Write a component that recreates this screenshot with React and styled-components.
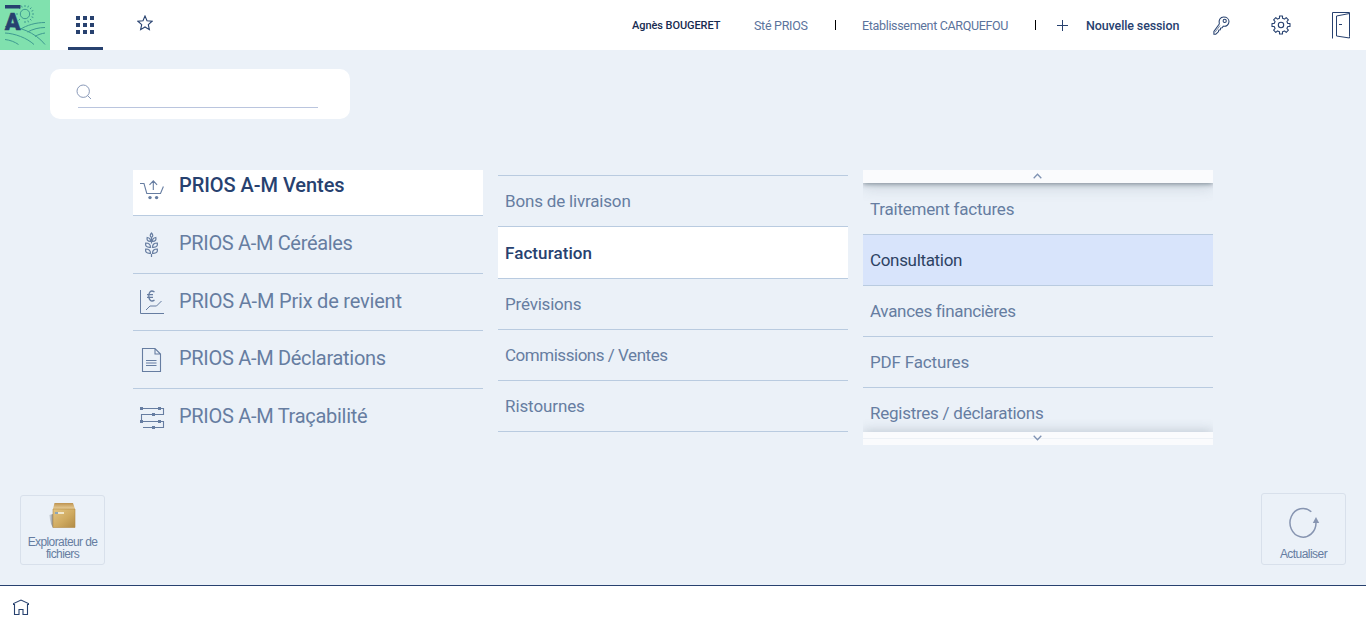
import React from 'react';
import styled, { createGlobalStyle } from 'styled-components';

const navy = '#27416f';
const muted = '#667da1';
const rule = '#b9cbe0';

const GlobalStyle = createGlobalStyle`
  * { box-sizing: border-box; }
  body { margin: 0; font-family: Roboto, "Liberation Sans", sans-serif; color: ${muted}; overflow: hidden; }
  svg { display: block; flex: none; }
`;

const Page = styled.div`
  display: flex;
  flex-direction: column;
  height: 627px;
  background: #ebf1f8;
`;

const Header = styled.header`
  display: flex;
  align-items: center;
  height: 50px;
  flex: none;
  background: #fff;
`;

const Tab = styled.div`
  display: flex;
  align-items: center;
  justify-content: center;
  width: 35px;
  height: 50px;
  margin-left: ${(p) => p.$gap}px;
  padding: ${(p) => (p.$active ? '3px 1px 0 0' : '0 1px 4px 0')};
  border-bottom: ${(p) => (p.$active ? `3px solid ${navy}` : 'none')};
`;

const Info = styled.div`
  display: flex;
  align-items: center;
  height: 50px;
  margin-left: auto;
  padding-right: 15px;
`;

const HeaderText = styled.span`
  width: ${(p) => p.$w}px;
  margin-right: ${(p) => p.$gap}px;
  font-size: ${(p) => p.$size}px;
  font-weight: ${(p) => (p.$strong ? 500 : 400)};
  letter-spacing: ${(p) => p.$ls}px;
  color: ${(p) => p.$color || '#5b739c'};
  line-height: 16px;
  padding-top: 1px;
  white-space: nowrap;
`;

const Divider = styled.span`
  width: 1px;
  height: 10px;
  margin-right: ${(p) => p.$gap}px;
  background: #000;
`;

const IconSlot = styled.span`
  margin-right: ${(p) => p.$gap || 0}px;
`;

const Main = styled.main`
  display: flex;
  flex-direction: column;
  flex: 1;
  padding: 19px 20px 20px;
`;

const Search = styled.div`
  width: 300px;
  height: 50px;
  margin-left: 30px;
  padding: 15px 32px 0 28px;
  border-radius: 10px;
  background: #fff;
`;

const SearchField = styled.div`
  height: 24px;
  border-bottom: 1px solid #bac5de;
`;

const SearchGlyph = styled.svg`
  margin-left: -2px;
`;

const Columns = styled.div`
  display: flex;
  gap: 15px;
  height: 275px;
  margin: 51px 0 0 113px;
`;

const Column = styled.div`
  display: flex;
  flex-direction: column;
  width: 350px;
  padding-top: ${(p) => p.$top || 0}px;
  overflow: hidden;
`;

const ModuleRow = styled.div`
  display: flex;
  align-items: center;
  flex: none;
  height: ${(p) => p.$h}px;
  margin-top: ${(p) => (p.$first ? -12 : 0)}px;
  padding: 0 0 ${(p) => p.$pad}px 6px;
  border-bottom: ${(p) => (p.$last ? 'none' : `1px solid ${rule}`)};
  background: ${(p) => (p.$active ? '#fff' : 'transparent')};
  color: ${(p) => (p.$active ? navy : muted)};
  font-size: 20px;
  font-weight: ${(p) => (p.$active ? 500 : 400)};
  letter-spacing: ${(p) => p.$ls}px;
  white-space: nowrap;
  svg { margin: ${(p) => p.$drop}px 14px 0 0; }
`;

const MenuList = styled.div`
  border-top: ${(p) => (p.$ruled ? `1px solid ${rule}` : 'none')};
`;

const MenuRow = styled.div`
  display: flex;
  align-items: center;
  height: ${(p) => p.$h || 51}px;
  padding-left: 7px;
  border-bottom: 1px solid ${rule};
  background: ${(p) => p.$bg || 'transparent'};
  color: ${(p) => p.$color || muted};
  font-size: 17px;
  font-weight: ${(p) => (p.$strong ? 500 : 400)};
  letter-spacing: ${(p) => p.$ls || 0}px;
  white-space: nowrap;
`;

const ScrollBar = styled.div`
  position: relative;
  display: flex;
  align-items: center;
  justify-content: center;
  flex: none;
  height: 13px;
  padding: 0 1px 1px 0;
  background: ${(p) => (p.$down ? 'linear-gradient(#fafbfd 6px, #edf1f6 6px, #edf1f6 7px, #fafbfd 7px)' : '#fafbfd')};
  box-shadow: ${(p) => (p.$down ? '0 -1px 12px rgba(60, 80, 100, .25)' : '0 1px 5px rgba(50, 65, 80, .55), 0 3px 16px rgba(60, 80, 100, .22)')};
`;

const ScrollArea = styled.div`
  height: 249px;
  overflow: hidden;
`;

const Shortcuts = styled.div`
  display: flex;
  justify-content: space-between;
  align-items: flex-end;
  margin-top: auto;
`;

const Shortcut = styled.div`
  display: flex;
  flex-direction: column;
  align-items: center;
  justify-content: flex-end;
  width: 85px;
  height: ${(p) => p.$h}px;
  padding-bottom: 4px;
  border: 1px solid #d8e0eb;
  border-radius: 3px;
  font: 12px/12px "Liberation Sans", Arial, sans-serif;
  letter-spacing: ${(p) => p.$ls}px;
  text-align: center;
`;

const ShortcutIcon = styled.div`
  margin-bottom: ${(p) => p.$gap}px;
`;

const Footer = styled.footer`
  display: flex;
  align-items: flex-start;
  flex: none;
  height: 42px;
  padding: 13px 0 0 13px;
  border-top: 1px solid ${navy};
  background: #fff;
`;

const Logo = () => (
  <svg width="50" height="50" viewBox="0 0 50 50">
    <rect width="50" height="50" fill="#80e1ae" />
    <g fill="none" stroke="#3e9a91" strokeWidth="1">
      <circle cx="25" cy="14" r="4.7" />
      <path d="M25 5v2M25 21v2M16 14h2M32 14h2M18.6 7.6l1.5 1.5M30 19l1.4 1.4M31.4 7.6L30 9M20 19l-1.4 1.4M21.5 5.7l.7 1.8M28.5 5.7l-.7 1.8M33.3 10.5l-1.8.7M33.3 17.5l-1.8-.7M28.5 22.3l-.7-1.8" />
      <path d="M20 29.5C27 25 36 22.5 45 22.5M27.500 32C33 29 39 27.500 45 27.500M35 36.500C38 34.500 42 33.500 45 33" />
      <path d="M5 26.500C18 26 35 32 45 44.500M5 33C15 33.500 27 38 34 44.500M5 39.500C10 40 15 42 18.500 44.500" />
    </g>
    <rect x="5" y="5" width="15.500" height="3.500" fill={navy} />
    <text x="12.700" y="29.500" textAnchor="middle" fontFamily="Roboto" fontWeight="900" fontSize="23" fill={navy} stroke={navy} strokeWidth=".4">A</text>
  </svg>
);

const GridIcon = () => (
  <svg width="18" height="18" fill={navy}>
    {[0, 7, 14].map((y) => [0, 7, 14].map((x) => <rect key={`${x}-${y}`} x={x} y={y} width="4" height="4" />))}
  </svg>
);

const StarIcon = () => (
  <svg width="16" height="16" viewBox="0 0 16 16" fill="none" stroke={navy} strokeWidth="1.1">
    <path d="M8 1l2 4.700 5.100.500-3.800 3.400 1.100 5L8 12l-4.400 2.600 1.100-5L.9 6.200 6 5.700z" />
  </svg>
);

const PlusIcon = () => (
  <svg width="11" height="11" stroke={navy}><path d="M5.500 0v11M0 5.500h11" /></svg>
);

const KeyIcon = () => (
  <svg width="17" height="19" viewBox="0 0 17 19" fill="none" stroke={navy} strokeWidth="1.050">
    <path d="M6.300 8C5.200 4.200 7.400 1 10.700 1c3 0 5.300 2 5.300 4.600 0 3-2.700 5.200-5.700 4.600l-1.200 1.600-1.500.3-.3 1.700-1.500.3-.4 1.700-2.600 2.400H.9v-2.700z" />
    <circle cx="11.700" cy="4.900" r="1.600" /><path d="M2 16.300L7 9.500" strokeWidth=".6" />
  </svg>
);

const GearIcon = () => (
  <svg width="20" height="20" viewBox="0 0 20 20" fill="none" stroke={navy} strokeWidth="1.100">
    <path d="M8.500 1h3v2.200l2 .9 1.700-1.500 2.200 2.200-1.500 1.700.9 2H19v3h-2.200l-.9 2 1.500 1.700-2.200 2.200-1.700-1.500-2 .9V19h-3v-2.200l-2-.9-1.700 1.500-2.200-2.200 1.500-1.700-.9-2H1v-3h2.200l.9-2-1.500-1.700 2.200-2.200 1.700 1.500 2-.9z" strokeLinejoin="round" />
    <circle cx="10" cy="10" r="2.700" />
  </svg>
);

const DoorIcon = () => (
  <svg width="19" height="27" viewBox="0 0 19 27" fill="none" stroke={navy}>
    <path d="M.5 26.500V.5h17v24M17.500 1.500L4.500 4v20l13 2v-1.500M7 12.500h3" />
  </svg>
);

const moduleIcons = {
  cart: (
    <svg width="26" height="26" viewBox="0 0 26 26" fill="none" stroke={muted} strokeWidth="1.100">
      <path d="M1 9.500h4l2.800 10h13.700l2.900-7M14.300 16V7M10.500 10.800l3.800-4 3.800 4" />
      <circle cx="11" cy="23.600" r="1.700" fill={muted} stroke="none" /><circle cx="17.600" cy="23.600" r="1.700" fill={muted} stroke="none" />
    </svg>
  ),
  wheat: (
    <svg width="26" height="26" viewBox="0 0 26 26" fill="none" stroke={muted} strokeWidth="1.200">
      <path d="M12.500 6.500v6M12.500 23v3M12.500 2c-1.700 1.700-1.700 3.300 0 4.500 1.700-1.200 1.700-2.800 0-4.500zM11.500 10.500C8.500 10.500 7.700 9 8.200 6.500c2.500.4 3.500 1.600 3.300 4zM13.500 10.500c3 0 3.800-1.500 3.300-4-2.500.4-3.500 1.600-3.300 4zM11.500 16.300c-4 .3-5.300-1.300-4.800-4.300 3.100 0 4.800 1.300 4.800 4.300zM13.500 16.300c4 .3 5.300-1.300 4.800-4.300-3.100 0-4.800 1.300-4.800 4.300zM11.500 22.300c-4 .3-5.300-1.300-4.800-4.300 3.100 0 4.800 1.300 4.800 4.300zM13.500 22.300c4 .3 5.300-1.300 4.800-4.300-3.100 0-4.800 1.300-4.800 4.300z" />
    </svg>
  ),
  price: (
    <svg width="26" height="26" viewBox="0 0 26 26" fill="none" stroke={muted}>
      <path d="M1.500 1v23.500H25M7 21l4-4h6.500l5-5" />
      <path d="M15.500 3C11.500.3 9.800 3.500 9.800 7s2 6.500 5.700 4.100M8 5.700h6M8 8.300h6" strokeWidth="1.300" />
    </svg>
  ),
  doc: (
    <svg width="26" height="26" viewBox="0 0 26 26" fill="none" stroke={muted} strokeWidth="1.100">
      <path d="M3.500 1.500h12.500l5.500 5.500v17.500h-18zM16 1.500v5.500h5.500" /><path d="M7 13.500h10.500M7 16h10.500M7 18.500h10.500" />
    </svg>
  ),
  trace: (
    <svg width="26" height="26" viewBox="0 0 26 26" fill="none" stroke={muted} strokeWidth="1.100">
      <path d="M2 3.500h22.500v6h-22v7h22v6H4" />
      <path d="M1 2h3v3H1zM19 2h3v3h-3zM13 8h3v3h-3zM1 15h3v3H1zM19 15h3v3h-3zM13 21h3v3h-3z" fill={muted} stroke="none" />
    </svg>
  ),
};

const Chevron = ({ down }) => (
  <svg width="9" height="6" fill="none" stroke="#7f92b3" strokeWidth="1.300">
    <path d={down ? 'M.7.7l3.800 4 3.800-4' : 'M.7 5.300l3.800-4 3.800 4'} />
  </svg>
);

const BoxIcon = () => (
  <svg width="28" height="27" viewBox="0 0 28 27">
    <defs>
      <linearGradient id="front" x1="0" y1="0" x2="1" y2="1"><stop stopColor="#e3c584" /><stop offset=".55" stopColor="#cfaa60" /><stop offset="1" stopColor="#b18b45" /></linearGradient>
      <linearGradient id="lid" x1="0" y1="0" x2="0" y2="1"><stop stopColor="#bd9350" /><stop offset="1" stopColor="#ead19c" /></linearGradient>
      <linearGradient id="shade" x1="0" y1="0" x2="1" y2="0"><stop stopColor="#8a94a0" stopOpacity=".15" /><stop offset="1" stopColor="#666" stopOpacity=".75" /></linearGradient>
    </defs>
    <path d="M0 13l4-1v14l-2-4z" fill="url(#shade)" />
    <path d="M5.500 1h18.500l2 6H4z" fill="url(#lid)" />
    <path d="M4 7h22v18.500H4z" fill="url(#front)" stroke="#b48a45" strokeWidth=".6" />
    <path d="M6 10h9v2H6z" fill="#f1e7ca" /><path d="M6 10h3v2H6z" fill="#8da6b8" />
  </svg>
);

const RefreshIcon = () => (
  <svg width="32" height="32" viewBox="0 0 32 32" fill="none" stroke="#8795b1" strokeWidth="1.500">
    <path d="M23.300 4.800A13 14.300 0 1 0 28 15.500" /><path d="M28 10l3.200 6H24.800z" fill="#8795b1" stroke="none" />
  </svg>
);

const HomeIcon = () => (
  <svg width="16" height="17" viewBox="0 0 16 17" fill="none" stroke={navy} strokeWidth="1.100">
    <path d="M.5 6V4.500L8 1l7.500 3.500V6M1.500 5v10.500h4.500V10.500h4v5h4.500V5" />
  </svg>
);

const modules = [
  { icon: 'cart', label: 'PRIOS A-M Ventes', h: 58, pad: 4, drop: 5, ls: -0.05, active: true },
  { icon: 'wheat', label: 'PRIOS A-M Céréales', h: 58, pad: 4, drop: 3, ls: -0.33 },
  { icon: 'price', label: 'PRIOS A-M Prix de revient', h: 57, pad: 2, drop: 2, ls: -0.2 },
  { icon: 'doc', label: 'PRIOS A-M Déclarations', h: 58, pad: 4, drop: 5, ls: -0.3 },
  { icon: 'trace', label: 'PRIOS A-M Traçabilité', h: 57, pad: 4, drop: 5, ls: -0.29 },
];

export default function App() {
  return (
    <>
      <GlobalStyle />
      <Page>
        <Header>
          <Logo />
          <Tab $gap={18} $active><GridIcon /></Tab>
          <Tab $gap={25}><StarIcon /></Tab>
          <Info>
            <HeaderText $w={89} $gap={33} $size={11} $ls={-0.07} $strong $color="#172b50">Agnès BOUGERET</HeaderText>
            <HeaderText $w={54} $gap={27} $size={12.5} $ls={-0.3}>Sté PRIOS</HeaderText>
            <Divider $gap={26} />
            <HeaderText $w={147} $gap={26} $size={12.5} $ls={-0.33}>Etablissement CARQUEFOU</HeaderText>
            <Divider $gap={21} />
            <IconSlot $gap={18}><PlusIcon /></IconSlot>
            <HeaderText $w={94} $gap={33} $size={12.5} $ls={-0.12} $strong $color={navy}>Nouvelle session</HeaderText>
            <IconSlot $gap={41}><KeyIcon /></IconSlot>
            <IconSlot $gap={41}><GearIcon /></IconSlot>
            <IconSlot><DoorIcon /></IconSlot>
          </Info>
        </Header>
        <Main>
          <Search>
            <SearchField>
              <SearchGlyph width="16" height="16" fill="none" stroke="#8999b8">
                <circle cx="7.200" cy="7.200" r="6.200" /><path d="M11.500 11.500l3.500 3.500" />
              </SearchGlyph>
            </SearchField>
          </Search>
          <Columns>
            <Column>
              {modules.map((m, i) => (
                <ModuleRow key={m.label} $h={m.h} $pad={m.pad} $drop={m.drop} $ls={m.ls} $active={m.active} $first={i === 0} $last={i === 4}>
                  {moduleIcons[m.icon]}{m.label}
                </ModuleRow>
              ))}
            </Column>
            <Column $top={5}>
              <MenuList $ruled>
                <MenuRow $ls={-0.18}>Bons de livraison</MenuRow>
                <MenuRow $h={52} $bg="#fff" $color={navy} $ls={0.08} $strong>Facturation</MenuRow>
                <MenuRow $ls={-0.2}>Prévisions</MenuRow>
                <MenuRow $ls={-0.47}>Commissions / Ventes</MenuRow>
                <MenuRow $ls={-0.1}>Ristournes</MenuRow>
              </MenuList>
            </Column>
            <Column>
              <ScrollBar><Chevron /></ScrollBar>
              <ScrollArea>
                <MenuList>
                  <MenuRow $h={52} $ls={-0.22}>Traitement factures</MenuRow>
                  <MenuRow $bg="#d8e4fb" $color="#2d4263" $ls={-0.33}>Consultation</MenuRow>
                  <MenuRow $ls={-0.32}>Avances financières</MenuRow>
                  <MenuRow $ls={-0.17}>PDF Factures</MenuRow>
                  <MenuRow $ls={-0.25}>Registres / déclarations</MenuRow>
                </MenuList>
              </ScrollArea>
              <ScrollBar $down><Chevron down /></ScrollBar>
            </Column>
          </Columns>
          <Shortcuts>
            <Shortcut $h={70} $ls={-0.6}>
              <ShortcutIcon $gap={7}><BoxIcon /></ShortcutIcon>
              Explorateur de fichiers
            </Shortcut>
            <Shortcut $h={72} $ls={-0.55}>
              <ShortcutIcon $gap={9}><RefreshIcon /></ShortcutIcon>
              Actualiser
            </Shortcut>
          </Shortcuts>
        </Main>
        <Footer><HomeIcon /></Footer>
      </Page>
    </>
  );
}
